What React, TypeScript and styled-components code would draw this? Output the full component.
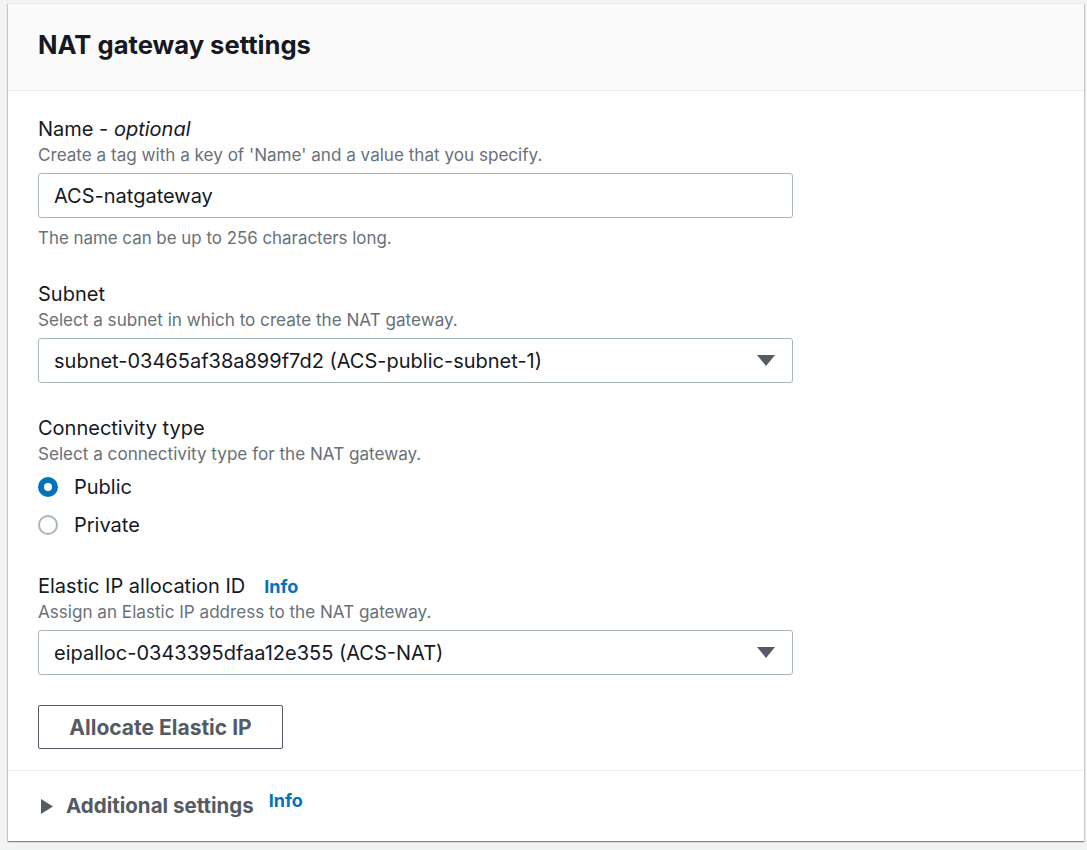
import React from "react";
import styled, { createGlobalStyle } from "styled-components";

const GlobalStyle = createGlobalStyle`
  html, body {
    margin: 0;
    padding: 0;
    background: #f2f3f3;
  }
  body {
    padding: 3px 3px 8px 8px;
    font-family: Inter, "Open Sans", Arial, sans-serif;
    color: #16191f;
  }
  * { box-sizing: border-box; }
`;

const Card = styled.section`
  background: #ffffff;
  border-top: 1px solid #eaeded;
  box-shadow: 0 1px 1px 0 rgba(0, 28, 36, 0.3), 1px 1px 1px 0 rgba(0, 28, 36, 0.15),
    -1px 1px 1px 0 rgba(0, 28, 36, 0.15);
  width: 1076px;
`;

const Header = styled.header`
  background: #fafafa;
  border-bottom: 1px solid #eaeded;
  height: 87px;
  padding: 0 30px;
  display: flex;
  align-items: center;
`;

const Title = styled.h2`
  margin: 0;
  font-size: 25.6px;
  line-height: 30px;
  font-weight: 700;
  color: #16191f;
  padding-bottom: 4px;
`;

const Body = styled.div`
  padding: 26px 30px 21px;
  display: flex;
  flex-direction: column;
  gap: 33px;
`;

const Field = styled.div`
  display: flex;
  flex-direction: column;
`;

const LabelRow = styled.div`
  display: flex;
  align-items: baseline;
  gap: 19px;
`;

const Label = styled.label`
  font-size: 20px;
  line-height: 24px;
  color: #16191f;
  em {
    font-style: italic;
  }
`;

const InfoLink = styled.a<{ $raised?: boolean }>`
  font-size: 18px;
  font-weight: 700;
  color: #0073bb;
  text-decoration: none;
  line-height: 20px;
  position: relative;
  top: ${(p) => (p.$raised ? "-5px" : "0")};
`;

const Description = styled.div`
  font-size: 17.1px;
  line-height: 20px;
  color: #687078;
  margin-top: 4px;
`;

const Constraint = styled(Description)`
  margin-top: 9px;
  line-height: 22px;
  font-size: 16.9px;
`;

const Control = styled.div`
  margin-top: 8px;
  width: 755px;
  height: 45px;
  border: 1px solid #aab7b8;
  border-radius: 3px;
  background: #ffffff;
  display: flex;
  align-items: center;
  justify-content: space-between;
  padding: 0 17px 0 15px;
  font-size: 20px;
  color: #16191f;
`;

const Caret = styled.svg`
  width: 18px;
  height: 11px;
  display: block;
`;

const RadioGroup = styled.div`
  margin-top: 8px;
  display: flex;
  flex-direction: column;
  gap: 8px;
`;

const RadioRow = styled.label`
  display: flex;
  align-items: center;
  height: 30px;
  gap: 16px;
  font-size: 20px;
  color: #16191f;
`;

const RadioDot = styled.span<{ $checked?: boolean }>`
  width: 20px;
  height: 20px;
  border-radius: 50%;
  flex: none;
  background: #ffffff;
  border: ${(p) => (p.$checked ? "6px solid #0073bb" : "2px solid #aab7b8")};
`;

const ElasticField = styled(Field)`
  margin-top: 1px;
`;

const ButtonWrap = styled.div`
  margin-top: -3px;
`;

const Button = styled.button`
  height: 44px;
  width: 245px;
  border: 1px solid #545b64;
  border-radius: 2px;
  background: #ffffff;
  color: #545b64;
  font-family: inherit;
  font-size: 21px;
  font-weight: 700;
  padding: 0;
`;

const Footer = styled.div`
  border-top: 1px solid #eaeded;
  height: 71px;
  padding: 0 30px 0 33px;
  display: flex;
  align-items: center;
`;

const Expand = styled.div`
  display: flex;
  align-items: center;
  gap: 13px;
`;

const ExpandTitle = styled.span`
  font-size: 20.5px;
  font-weight: 700;
  color: #545b64;
  line-height: 24px;
`;

const ExpandInfo = styled(InfoLink)`
  margin-left: 2px;
`;

const CaretDown = () => (
  <Caret viewBox="0 0 18 11">
    <path d="M0 0 H18 L9 11 Z" fill="#545b64" />
  </Caret>
);

export default function App() {
  return (
    <>
      <GlobalStyle />
      <Card>
        <Header>
          <Title>NAT gateway settings</Title>
        </Header>
        <Body>
          <Field>
            <Label>
              Name - <em>optional</em>
            </Label>
            <Description>Create a tag with a key of 'Name' and a value that you specify.</Description>
            <Control>ACS-natgateway</Control>
            <Constraint>The name can be up to 256 characters long.</Constraint>
          </Field>
          <Field>
            <Label>Subnet</Label>
            <Description>Select a subnet in which to create the NAT gateway.</Description>
            <Control>
              <span>subnet-03465af38a899f7d2 (ACS-public-subnet-1)</span>
              <CaretDown />
            </Control>
          </Field>
          <Field>
            <Label>Connectivity type</Label>
            <Description>Select a connectivity type for the NAT gateway.</Description>
            <RadioGroup>
              <RadioRow>
                <RadioDot $checked />
                Public
              </RadioRow>
              <RadioRow>
                <RadioDot />
                Private
              </RadioRow>
            </RadioGroup>
          </Field>
          <ElasticField>
            <LabelRow>
              <Label>Elastic IP allocation ID</Label>
              <InfoLink href="#">Info</InfoLink>
            </LabelRow>
            <Description>Assign an Elastic IP address to the NAT gateway.</Description>
            <Control>
              <span>eipalloc-0343395dfaa12e355 (ACS-NAT)</span>
              <CaretDown />
            </Control>
          </ElasticField>
          <ButtonWrap>
            <Button>Allocate Elastic IP</Button>
          </ButtonWrap>
        </Body>
        <Footer>
          <Expand>
            <svg width="12" height="15" viewBox="0 0 12 15">
              <path d="M0 0 L12 7.5 L0 15 Z" fill="#545b64" />
            </svg>
            <ExpandTitle>Additional settings</ExpandTitle>
            <ExpandInfo href="#" $raised>
              Info
            </ExpandInfo>
          </Expand>
        </Footer>
      </Card>
    </>
  );
}
